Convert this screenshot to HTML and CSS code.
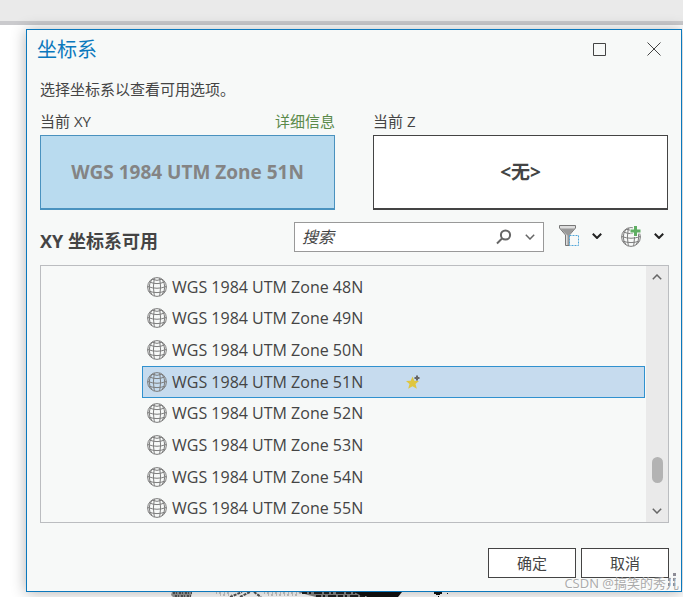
FILE: index.html
```html
<!DOCTYPE html>
<html lang="zh-CN">
<head>
    <meta charset="UTF-8">
    <meta name="viewport" content="width=device-width, initial-scale=1.0">
    <title>坐标系</title>
    <link rel="stylesheet" href="styles.css">
</head>
<body>
    <svg class="symbols" width="0" height="0" aria-hidden="true">
        <symbol id="globe" viewBox="0 0 20 20">
            <circle cx="10" cy="10" r="9.4"/>
            <path d="M7.300 .9Q5.500 10 7.300 19.100M12.700 .9Q14.500 10 12.700 19.100M5 2.200Q-.5 10 5 17.800M15 2.200Q20.500 10 15 17.800"/>
            <path d="M5 2.200Q10 4.500 15 2.200M2.500 5Q10 8.200 17.500 5M.8 9.500Q10 13 19.200 9.500M1.600 14Q10 17.200 18.400 14"/>
        </symbol>
        <symbol id="chevron" viewBox="0 0 10 6">
            <path d="M.8 .8L5 5L9.200 .8"/>
        </symbol>
    </svg>

    <div class="ribbon"></div>
    <svg class="map" width="290" height="5" aria-hidden="true">
        <path fill="#999" d="M2 0H22L21 5H3L1 3Z"/>
        <path stroke="#555" stroke-width="2" stroke-dasharray="2 1 1 2" d="M3 1H22M5 4H21"/>
        <path stroke="#999" stroke-dasharray="1 2 2 3" d="M46 1H60M50 3H62M94 1H132M98 3H130"/>
        <path stroke="#555" stroke-width="2" stroke-dasharray="3 1" d="M60 5L72 0M70 5L80 0M84 0L91 5"/>
        <path fill="#888" d="M128 0H190V5H146L138 3Z"/>
        <path stroke="#222" stroke-width="2" stroke-dasharray="5 2 2 3 8 2" d="M132 1H190M146 4H200"/>
        <path fill="#111" d="M184 0H232L228 5H198L190 3Z"/>
        <path fill="#111" d="M264 0H272V2H270V3H266V2H264ZM277 1H278V2H277ZM268 4H269V5H268Z"/>
    </svg>

    <main class="dialog">
        <header class="titlebar">
            <h1>坐标系</h1>
            <button class="window-button" aria-label="最大化">
                <svg width="13" height="13"><path d="M.5 .5H12.500V12.500H.5Z"/></svg>
            </button>
            <button class="window-button" aria-label="关闭">
                <svg width="14" height="14"><path d="M.5 .5L13.500 13.500M13.500 .5L.5 13.500"/></svg>
            </button>
        </header>

        <p class="intro">选择坐标系以查看可用选项。</p>

        <div class="current">
            <section class="current-item">
                <div class="current-label"><span>当前 XY</span><a href="#">详细信息</a></div>
                <button class="current-box selected">WGS 1984 UTM Zone 51N</button>
            </section>
            <section class="current-item">
                <div class="current-label"><span>当前 Z</span></div>
                <button class="current-box">&lt;无&gt;</button>
            </section>
        </div>

        <div class="toolbar">
            <h2>XY 坐标系可用</h2>
            <div class="search">
                <input type="text" placeholder="搜索" aria-label="搜索">
                <button aria-label="开始搜索">
                    <svg class="magnifier" width="16" height="16"><circle cx="9.500" cy="6" r="4.600"/><path d="M6 9.500L1 14.500"/></svg>
                </button>
                <button aria-label="搜索选项"><svg class="chevron" width="10" height="6"><use href="#chevron"/></svg></button>
            </div>
            <button class="tool" aria-label="过滤器">
                <svg width="22" height="22">
                    <path fill="#ddd" stroke="#777" d="M1.500 .5H17.500V3L11.500 10V20.500H7.500V10L1.500 3Z"/>
                    <path fill="#999" d="M2 3.500H17L11.500 9.500V20H9.500V10.500Z"/>
                    <path fill="#f7f9f8" stroke="#4fa5d8" stroke-dasharray="2 1" d="M11.500 10.500H20.500V20.500H11.500Z"/>
                </svg>
                <svg class="chevron dark" width="10" height="6"><use href="#chevron"/></svg>
            </button>
            <button class="tool" aria-label="添加坐标系">
                <svg width="22" height="22">
                    <use class="globe" href="#globe" x="1" y="2" width="20" height="20"/>
                    <path stroke="#f7f9f8" stroke-width="5" d="M15.500 0V12M10 6H21"/>
                    <path stroke="#5fae63" stroke-width="3" d="M15.500 1V11M10.500 6H20.500"/>
                </svg>
                <svg class="chevron dark" width="10" height="6"><use href="#chevron"/></svg>
            </button>
        </div>

        <div class="tree">
            <ul class="tree-items">
                <li><svg class="globe" width="20" height="20"><use href="#globe"/></svg>WGS 1984 UTM Zone 48N</li>
                <li><svg class="globe" width="20" height="20"><use href="#globe"/></svg>WGS 1984 UTM Zone 49N</li>
                <li><svg class="globe" width="20" height="20"><use href="#globe"/></svg>WGS 1984 UTM Zone 50N</li>
                <li class="active">
                    <svg class="globe" width="20" height="20"><use href="#globe"/></svg>WGS 1984 UTM Zone 51N
                    <svg class="star" width="14" height="14">
                        <path fill="#dfc63f" d="M6.500 1.500L8.300 5.700L13 6L9.500 9L10.800 13.700L6.500 11.200L2.200 13.700L3.500 9L0 6L4.700 5.700Z"/>
                        <path stroke="#666" stroke-width="2" d="M11 .5V5.500M8.500 3H13.500"/>
                    </svg>
                </li>
                <li><svg class="globe" width="20" height="20"><use href="#globe"/></svg>WGS 1984 UTM Zone 52N</li>
                <li><svg class="globe" width="20" height="20"><use href="#globe"/></svg>WGS 1984 UTM Zone 53N</li>
                <li><svg class="globe" width="20" height="20"><use href="#globe"/></svg>WGS 1984 UTM Zone 54N</li>
                <li><svg class="globe" width="20" height="20"><use href="#globe"/></svg>WGS 1984 UTM Zone 55N</li>
            </ul>
            <div class="scrollbar">
                <svg class="chevron up" width="10" height="6"><use href="#chevron"/></svg>
                <div class="thumb"></div>
                <svg class="chevron" width="10" height="6"><use href="#chevron"/></svg>
            </div>
        </div>

        <footer class="actions">
            <button>确定</button>
            <button>取消</button>
        </footer>

        <svg class="grip" width="12" height="13" aria-hidden="true">
            <path d="M9 0H12V3H9ZM9 5H12V8H9ZM4 5H7V8H4ZM9 10H12V13H9ZM4 10H7V13H4Z"/>
        </svg>
        <span class="watermark">CSDN @搞笑的秀儿</span>
    </main>
</body>
</html>
```

FILE: styles.css
```css
* {
    box-sizing: border-box;
}
body {
    margin: 0;
    min-height: 100vh;
    position: relative;
    overflow: hidden;
    background-color: #fff;
    color: #444;
    font-family: "Open Sans", "Noto Sans CJK SC", sans-serif;
    font-size: 15px;
    line-height: 20px;
}
h1, h2, p, ul {
    margin: 0;
    padding: 0;
}
button, input {
    font: inherit;
    color: inherit;
}
button {
    padding: 0;
    border: none;
    background: none;
    cursor: pointer;
}
svg {
    display: block;
    flex: none;
    fill: none;
}
.symbols {
    position: absolute;
}
.ribbon {
    height: 25px;
    background-color: #eaeaea;
    border-bottom: 4px solid #cacacd;
}
.map {
    position: absolute;
    left: 170px;
    bottom: 0;
}
.dialog {
    position: relative;
    margin: 4px 1px 5px 26px;
    padding: 0 12px 13px 13px;
    background-color: #f7f9f8;
    border: 1px solid #0b78bd;
    box-shadow: 0 1px 14px rgba(0, 0, 0, 0.3);
}
.titlebar {
    display: flex;
    align-items: center;
    height: 38px;
    margin-right: 1px;
}
.titlebar h1 {
    flex: 1;
    margin-left: -3px;
    padding-top: 2px;
    color: #0b78bd;
    font-size: 20px;
    font-weight: normal;
}
.window-button {
    display: flex;
    justify-content: center;
    width: 28px;
    margin-left: 27px;
    stroke: #444;
}
.intro {
    margin-top: 11px;
}
.current {
    display: flex;
    gap: 38px;
    margin: 12px 1px 0 0;
}
.current-item {
    flex: 1;
}
.current-label {
    display: flex;
    justify-content: space-between;
    margin-bottom: 4px;
}
.current-label a {
    color: #5a8a4a;
    text-decoration: none;
}
.current-box {
    display: block;
    width: 100%;
    height: 75px;
    background-color: #fff;
    border: 1px solid #444;
    border-bottom-width: 2px;
    font-size: 19px;
    font-weight: bold;
}
.current-box.selected {
    background-color: #b9dbef;
    border-color: #4a92bf;
    color: #848484;
}
.toolbar {
    display: flex;
    align-items: center;
    height: 30px;
    margin: 12px 5px 0 0;
}
.toolbar h2 {
    flex: 1;
    padding-top: 8px;
    font-size: 18px;
}
.search {
    display: flex;
    width: 250px;
    height: 30px;
    background-color: #fff;
    border: 1px solid #999;
}
.search input {
    flex: 1;
    min-width: 0;
    padding: 0 7px;
    border: none;
    background: none;
    font-size: 16px;
    font-style: italic;
}
.search input::placeholder {
    color: #444;
}
.search button {
    display: flex;
    align-items: center;
    justify-content: center;
    width: 26px;
}
.magnifier {
    stroke: #666;
    stroke-width: 2;
}
.chevron {
    stroke: #666;
    stroke-width: 1.5;
}
.chevron.dark {
    stroke: #222;
    stroke-width: 2;
}
.chevron.up {
    transform: rotate(180deg);
}
.tool {
    display: flex;
    align-items: center;
    gap: 12px;
    margin-left: 14px;
    padding-bottom: 3px;
}
.tool + .tool {
    margin-left: 18px;
}
.globe {
    stroke: #7c7c7c;
    stroke-width: 1;
}
.tree {
    display: flex;
    height: 258px;
    margin-top: 13px;
    overflow: hidden;
    border: 1px solid #bbbdc0;
}
.tree-items {
    display: flex;
    flex: 1;
    flex-direction: column;
    margin-bottom: -2px;
    padding: 5px 1px 0 101px;
    font-size: 16px;
    list-style: none;
}
.tree-items li {
    display: flex;
    flex: 1;
    align-items: center;
    gap: 5px;
    padding-left: 4px;
    border: 1px solid transparent;
}
.tree-items .active {
    background-color: #c6dbee;
    border-color: #3091cf;
}
.star {
    margin-left: 38px;
}
.scrollbar {
    display: flex;
    flex-direction: column;
    align-items: center;
    width: 22px;
    padding: 8px 0;
    background-color: #eaeaea;
}
.thumb {
    width: 11px;
    height: 26px;
    margin: auto 0 25px;
    background-color: #b3b3b3;
    border-radius: 6px;
}
.actions {
    display: flex;
    justify-content: flex-end;
    gap: 5px;
    margin-top: 25px;
}
.actions button {
    width: 88px;
    height: 30px;
    background-color: #fff;
    border: 1px solid #444;
}
.grip {
    position: absolute;
    right: 5px;
    bottom: 5px;
    fill: #8c8c96;
}
.watermark {
    position: absolute;
    right: 2px;
    bottom: -2px;
    color: #aaa;
    font-size: 13px;
    text-shadow: 1px 1px 0 #fff;
}
```
